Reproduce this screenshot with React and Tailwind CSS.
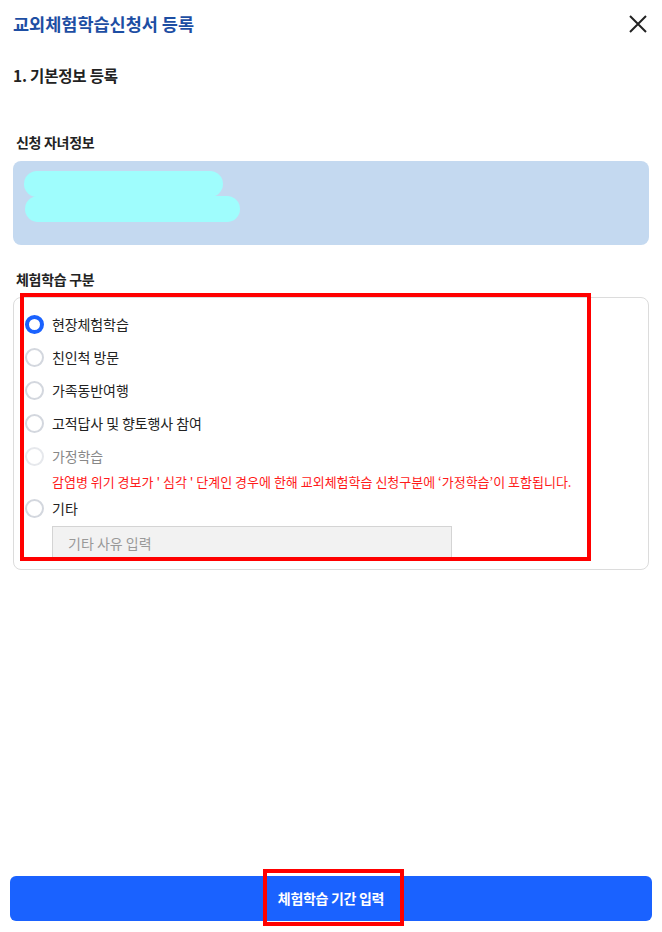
import { useState } from "react";

const options = [
  { id: "field", label: "현장체험학습" },
  { id: "family", label: "친인척 방문" },
  { id: "trip", label: "가족동반여행" },
  { id: "heritage", label: "고적답사 및 향토행사 참여" },
];

function Radio({ checked, disabled }) {
  return (
    <span
      className={`w-[19px] h-[19px] rounded-full shrink-0 bg-white ${
        checked ? "border-[4px] border-[#1a62ff]" : disabled ? "border-2 border-[#e6e8ec]" : "border-2 border-[#d3d7de]"
      }`}
    />
  );
}

export default function App() {
  const [kind, setKind] = useState("field");
  const [etc, setEtc] = useState("");

  return (
    <div className="relative w-[662px] h-[932px] bg-white flex flex-col font-['Noto_Sans_CJK_KR','Noto_Sans',sans-serif] text-[#222]">
      <header className="flex items-center justify-between pl-[13px] pr-[13px] pt-[4px] h-[44px]">
        <h1 className="text-[17.5px] font-bold text-[#1d4ea3]">교외체험학습신청서 등록</h1>
        <button className="w-[22px] h-[22px] flex items-center justify-center text-[#222]">
          <svg width="20" height="20" viewBox="0 0 20 20" fill="none" stroke="currentColor" strokeWidth="2">
            <path d="M2 2L18 18M18 2L2 18" />
          </svg>
        </button>
      </header>

      <div className="px-[13px]">
        <h2 className="mt-[20px] text-[15.5px] font-bold leading-[22px] tracking-[-0.2px]">1. 기본정보 등록</h2>

        <h3 className="mt-[45px] pl-[3px] text-[14px] font-semibold leading-[22px] tracking-[-0.3px]">신청 자녀정보</h3>
        <div className="mt-[8px] h-[84px] rounded-[8px] bg-[#c4d9f0] pt-[10px] pl-[11px]">
          <div className="w-[199px] h-[26px] rounded-full bg-[#9ffdfd]" />
          <div className="-mt-px ml-[1px] w-[215px] h-[26px] rounded-full bg-[#9ffdfd]" />
        </div>

        <h3 className="mt-[23px] pl-[3px] text-[14px] font-semibold leading-[22px] tracking-[-0.3px]">체험학습 구분</h3>
        <div className="mt-[7px] h-[273px] rounded-[8px] border border-[#dcdcdc] pl-[11px] pt-[10px]">
          <div className="flex flex-col">
            {options.map((o) => (
              <label key={o.id} onClick={() => setKind(o.id)} className="flex items-center gap-[8px] h-[33px] cursor-pointer">
                <Radio checked={kind === o.id} />
                <span className="text-[14px] text-[#222] tracking-[-0.1px]">{o.label}</span>
              </label>
            ))}
            <label className="flex items-center gap-[8px] h-[33px]">
              <Radio disabled />
              <span className="text-[14px] text-[#888] tracking-[-0.1px]">가정학습</span>
            </label>
            <p className="-mt-[1px] pl-[27px] text-[13px] leading-[20px] text-[#ff1a1a]">
              감염병 위기 경보가 ' 심각 ' 단계인 경우에 한해 교외체험학습 신청구분에 ‘가정학습’이 포함됩니다.
            </p>
            <label onClick={() => setKind("etc")} className="flex items-center gap-[8px] h-[33px] cursor-pointer">
              <Radio checked={kind === "etc"} />
              <span className="text-[14px] text-[#222]">기타</span>
            </label>
            <input
              value={etc}
              onChange={(e) => setEtc(e.target.value)}
              placeholder="기타 사유 입력"
              className="mt-[1px] ml-[27px] w-[400px] h-[34px] border border-[#d4d4d4] bg-[#f2f2f2] px-[15px] text-[14px] placeholder:text-[#999] outline-none"
            />
          </div>
        </div>
      </div>

      <div className="mt-auto px-[10px] pb-[11px]">
        <button className="w-full h-[45px] rounded-[6px] bg-[#1a62ff] text-white text-[14px] font-bold tracking-[-0.3px]">
          체험학습 기간 입력
        </button>
      </div>

      <div className="absolute left-[20px] top-[293px] w-[571px] h-[268px] border-[4px] border-[#ff0000] pointer-events-none" />
      <div className="absolute left-[263px] top-[869px] w-[141px] h-[57px] border-[4px] border-[#ff0000] pointer-events-none" />
    </div>
  );
}
